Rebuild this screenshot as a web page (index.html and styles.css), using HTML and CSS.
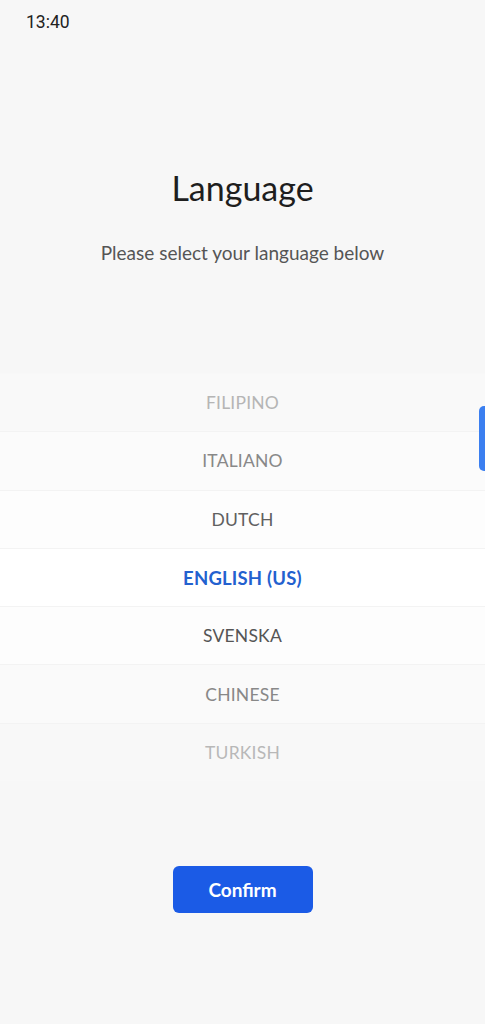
FILE: index.html
```html
<!DOCTYPE html>
<html>
<head>
<meta charset="utf-8">
<link rel="stylesheet" href="styles.css">
</head>
<body>
<div class="screen">
  <div class="status">13:40</div>
  <h1 class="title">Language</h1>
  <p class="subtitle">Please select your language below</p>
  <div class="picker">
    <div class="row r1">FILIPINO</div>
    <div class="row r2">ITALIANO</div>
    <div class="row r3">DUTCH</div>
    <div class="row sel">ENGLISH (US)</div>
    <div class="row r5">SVENSKA</div>
    <div class="row r6">CHINESE</div>
    <div class="row r7">TURKISH</div>
  </div>
  <div class="actions">
    <button class="confirm">Confirm</button>
  </div>
  <div class="edge-tab"></div>
</div>
</body>
</html>
```
FILE: styles.css
```css
html, body {
  margin: 0;
  padding: 0;
  background: #f7f7f7;
}
.screen {
  position: relative;
  width: 485px;
  height: 1024px;
  overflow: hidden;
  font-family: Lato, "Open Sans", sans-serif;
  display: flex;
  flex-direction: column;
}
.status {
  padding: 10px 0 0 26px;
  height: 32px;
  box-sizing: border-box;
  font-family: Roboto, sans-serif;
  font-size: 17.5px;
  line-height: 24px;
  color: #222;
}
.title {
  margin: 136px 0 0;
  text-align: center;
  font-size: 34px;
  line-height: 40px;
  font-weight: 400;
  color: #1e1e1e;
}
.subtitle {
  margin: 32px 0 0;
  text-align: center;
  font-size: 19px;
  line-height: 26px;
  color: #555;
}
.picker {
  margin-top: 107px;
  display: flex;
  flex-direction: column;
}
.row {
  height: 58.3px;
  display: flex;
  align-items: center;
  justify-content: center;
  font-size: 17.5px;
  letter-spacing: 0.2px;
  border-top: 1px solid #f3f3f3;
  box-sizing: border-box;
}
.r1 { color: #b5b5b5; background: #f9f9f9; border-top-color: #f8f8f8; }
.r2 { color: #888; background: #fbfbfb; }
.r3 { color: #606060; background: #fdfdfd; }
.sel { color: #2361cf; background: #fff; font-weight: 700; font-size: 18.5px; }
.r5 { color: #555; background: #fdfdfd; }
.r6 { color: #888; background: #fafafa; }
.r7 { color: #b8b8b8; background: #f8f8f8; }
.actions {
  margin-top: 85px;
  display: flex;
  justify-content: center;
}
.confirm {
  width: 140px;
  height: 47px;
  border: none;
  border-radius: 6px;
  background: #1b5be6;
  color: #fff;
  font-family: Lato, sans-serif;
  font-size: 19px;
  font-weight: 700;
  padding: 0;
}
.edge-tab {
  position: absolute;
  right: 0;
  top: 406px;
  width: 6px;
  height: 65px;
  background: #3b7ff0;
  border-radius: 5px 0 0 5px;
}
```
